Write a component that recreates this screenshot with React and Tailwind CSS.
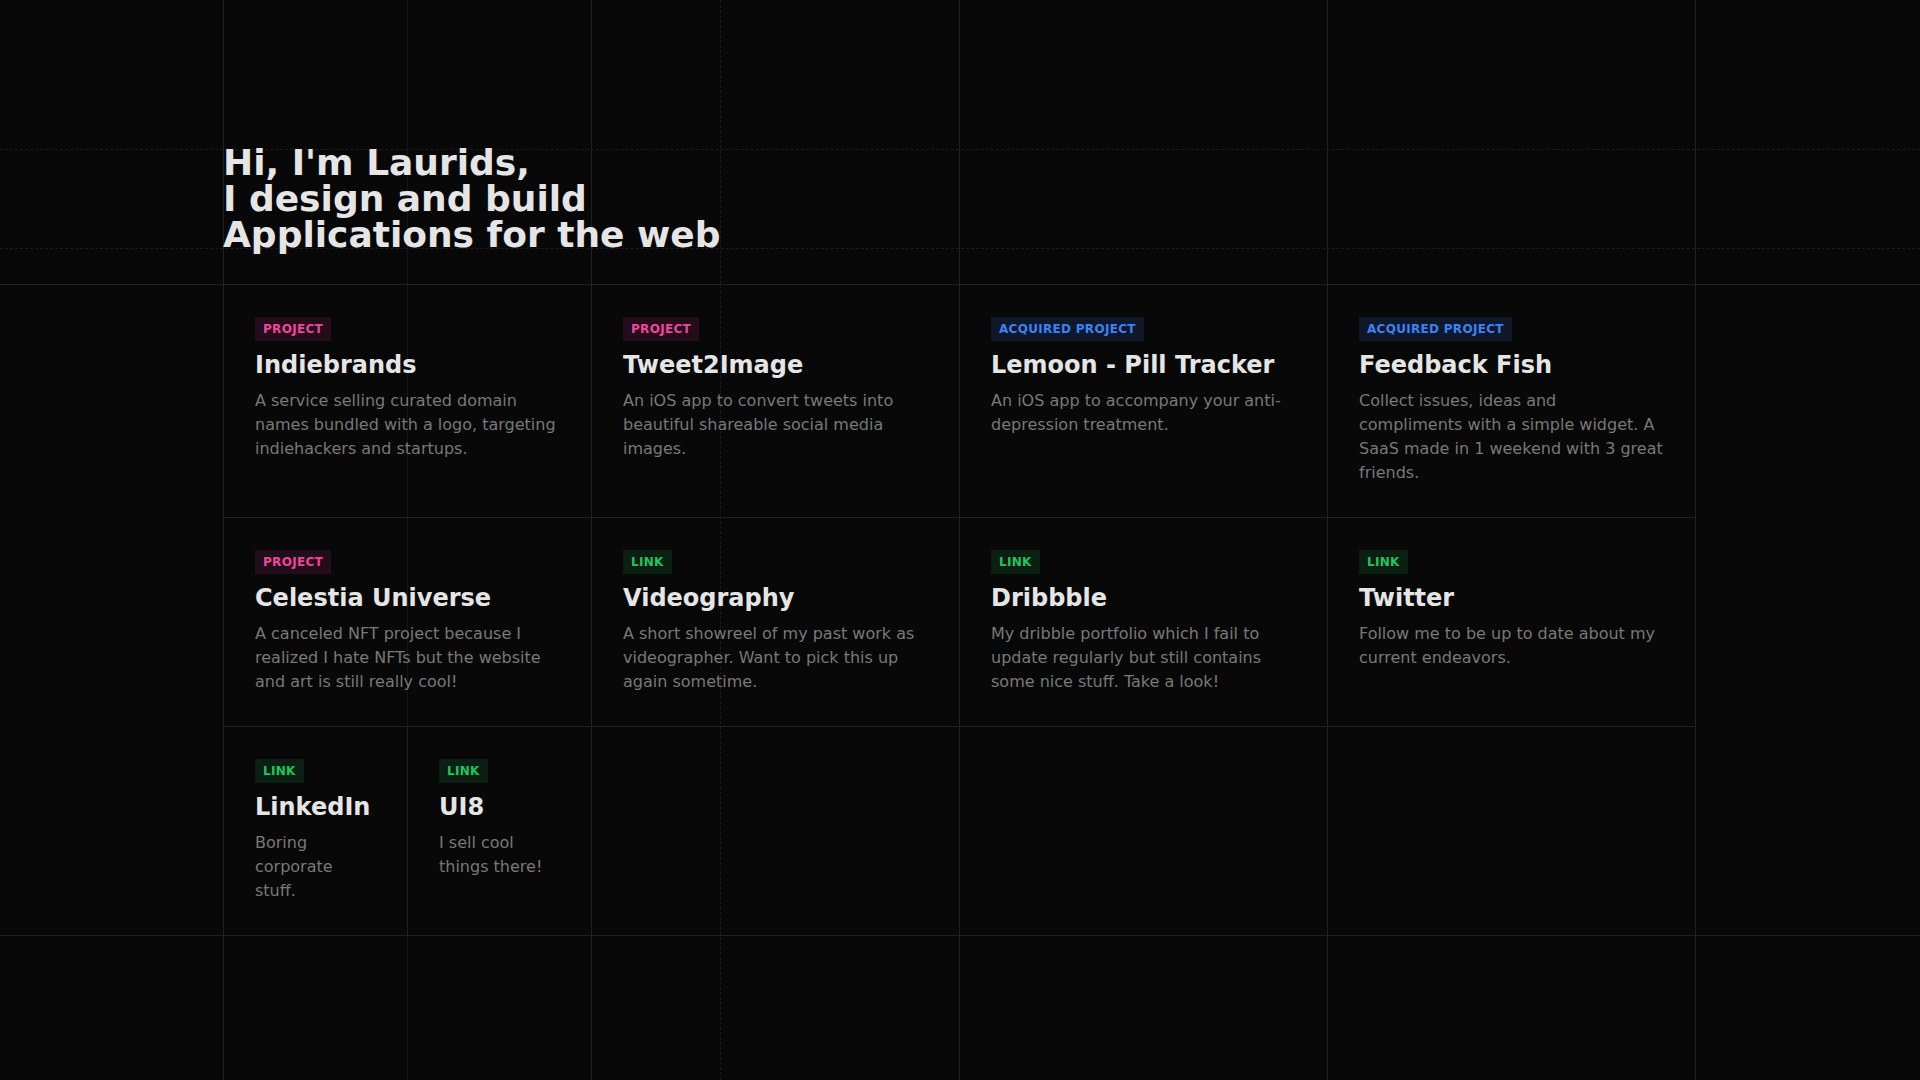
import React from "react";

const badgeStyles = {
  project: "text-[#ec4899] bg-[#240d1b]",
  acquired: "text-[#3b82f6] bg-[#0f1829]",
  link: "text-[#22c55e] bg-[#0b1f13]",
};

const badgeLabels = {
  project: "Project",
  acquired: "Acquired Project",
  link: "Link",
};

const items = [
  {
    type: "project",
    title: "Indiebrands",
    text: "A service selling curated domain names bundled with a logo, targeting indiehackers and startups.",
  },
  {
    type: "project",
    title: "Tweet2Image",
    text: "An iOS app to convert tweets into beautiful shareable social media images.",
  },
  {
    type: "acquired",
    title: "Lemoon - Pill Tracker",
    text: "An iOS app to accompany your anti-depression treatment.",
  },
  {
    type: "acquired",
    title: "Feedback Fish",
    text: "Collect issues, ideas and compliments with a simple widget. A SaaS made in 1 weekend with 3 great friends.",
  },
  {
    type: "project",
    title: "Celestia Universe",
    text: "A canceled NFT project because I realized I hate NFTs but the website and art is still really cool!",
  },
  {
    type: "link",
    title: "Videography",
    text: "A short showreel of my past work as videographer. Want to pick this up again sometime.",
  },
  {
    type: "link",
    title: "Dribbble",
    text: "My dribble portfolio which I fail to update regularly but still contains some nice stuff. Take a look!",
  },
  {
    type: "link",
    title: "Twitter",
    text: "Follow me to be up to date about my current endeavors.",
  },
];

const small = [
  { type: "link", title: "LinkedIn", text: "Boring corporate stuff." },
  { type: "link", title: "UI8", text: "I sell cool things there!" },
];

function Card({ item, className = "" }) {
  return (
    <a
      href="#"
      className={
        "flex flex-col items-start py-8 px-[31px] border-r border-[#202020] " +
        className
      }
    >
      <span
        className={
          "px-2 py-1 text-xs font-bold uppercase tracking-wide " +
          badgeStyles[item.type]
        }
      >
        {badgeLabels[item.type]}
      </span>
      <h2 className="mt-2 text-2xl font-bold text-[#e5e5e5]">{item.title}</h2>
      <p className="mt-2 text-base text-[#787878]">{item.text}</p>
    </a>
  );
}

export default function App() {
  return (
    <div className="relative min-h-screen overflow-hidden bg-[#080808] font-['DejaVu_Sans',sans-serif]">
      {/* background grid: vertical guides */}
      <div className="pointer-events-none absolute inset-0 flex">
        <div className="w-[223px] shrink-0" />
        <div className="w-[184px] shrink-0 border-l border-[#202020]" />
        <div className="w-[184px] shrink-0 border-l border-[#161616]" />
        <div className="w-[129px] shrink-0 border-l border-[#202020]" />
        <div className="w-[239px] shrink-0 border-l border-dashed border-[#1c1c1c]" />
        <div className="w-[368px] shrink-0 border-l border-[#202020]" />
        <div className="w-[368px] shrink-0 border-l border-[#202020]" />
        <div className="flex-1 border-l border-[#202020]" />
      </div>
      {/* background grid: horizontal dotted guides */}
      <div className="pointer-events-none absolute inset-0 flex flex-col">
        <div className="h-[149px] shrink-0" />
        <div className="h-[99px] shrink-0 border-t border-dashed border-[#1c1c1c]" />
        <div className="border-t border-dashed border-[#1c1c1c]" />
      </div>

      {/* Intro */}
      <header className="relative h-[285px] border-b border-[#202020] pl-[223px] pt-[145px]">
        <h1 className="text-[36px] font-bold leading-9 text-[#e5e5e5]">
          Hi, I'm Laurids,
          <br />
          I design and build
          <br />
          Applications for the web
        </h1>
      </header>

      {/* Projects and links */}
      <section className="relative border-b border-[#202020] pl-[223px]">
        <div className="grid w-[1473px] grid-cols-4 border-l border-[#202020]">
          {items.map((item) => (
            <Card key={item.title} item={item} className="border-b" />
          ))}
          <div className="grid grid-cols-[184px_184px]">
            {small.map((item) => (
              <Card key={item.title} item={item} />
            ))}
          </div>
        </div>
      </section>
    </div>
  );
}
